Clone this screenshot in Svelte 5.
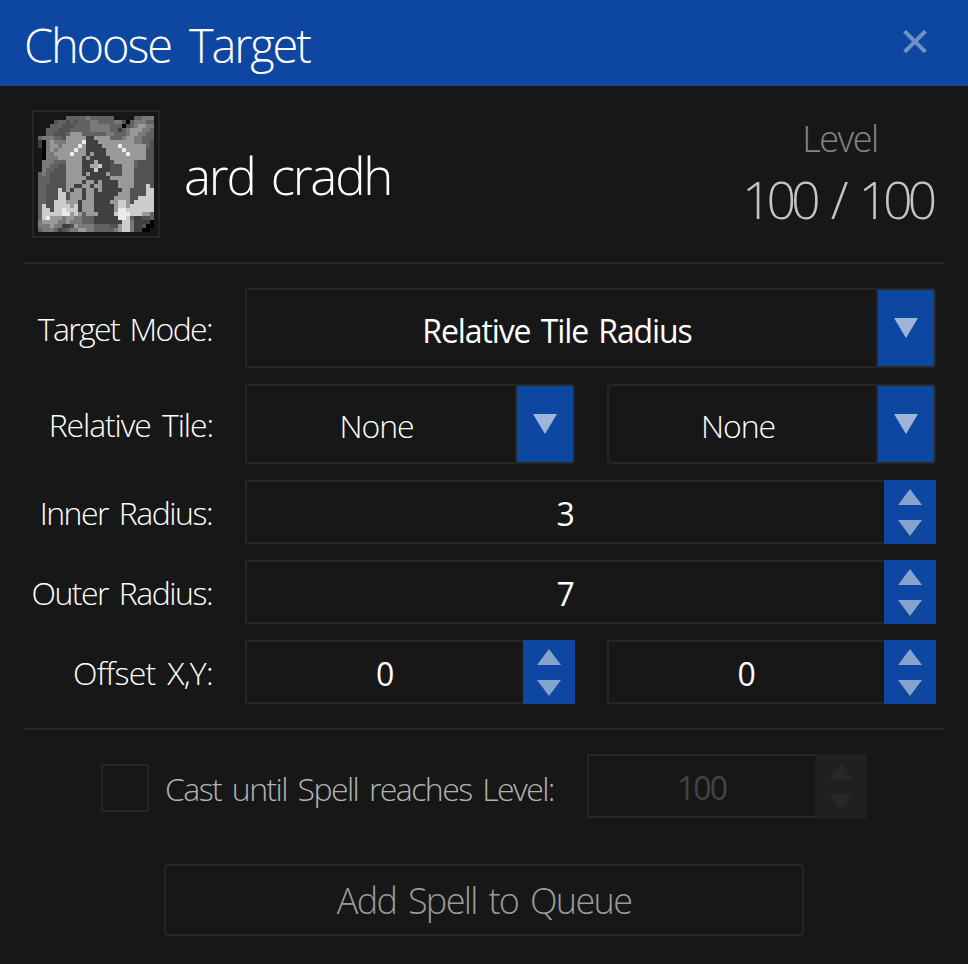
<script>
  // Spell icon, one character per pixel: '.' is empty, 0-9 runs from black to near white.
  const shades = ['#000000', '#262626', '#404040', '#525252', '#626262', '#7a7a7a', '#999999', '#a8a8a8', '#cccccc', '#eaeaea'];
  const sprite = [
    '.......444445444444.....44555',
    '....3443434445544445530455544',
    '...44433344445555544403456655',
    '..444333444445555544245666554',
    '..443334666444444554445665544',
    '45554436666622666644456655444',
    '20565556666922266666666655443',
    '20566566669622226666966666643',
    '.0565666696622222666696666633',
    '.0556666966626222666669666633',
    '.0555666666262222266666666633',
    '.5554446666222722236666643333',
    '.5544336666227782233366643333',
    '.5443336666222822233366633333',
    '45433336666262222633366633333',
    '44433336666622222266666633333',
    '44433336666266262222666633333',
    '44333336622662662222666633383',
    '44333836266266262222266333388',
    '44333883666266222222666333388',
    '44333883666266222226666338888',
    '44338886662666222266886388888',
    '48338888682666222226886888888',
    '48838898882666222226998888888',
    '48888899686466622228999888664',
    '48966656655444222222998422334',
    '56666556555444222222288522220',
    '55565522365555444433688522300',
    '4555423455665544444568852200.'
  ];
  const pixels = sprite.flatMap((row, y) =>
    [...row].map((c, x) => ({ c, x, y })).filter((p) => p.c !== '.')
  );
</script>

{#snippet combo(value, strong)}
  <div class="combo">
    <span class="value" class:strong>{value}</span>
    <button class="drop" aria-label="Open list">
      <svg width="24" height="20"><path d="M0 0H24L12 20Z" /></svg>
    </button>
  </div>
{/snippet}

{#snippet spinner(value, disabled)}
  <div class="spinner" class:disabled>
    <span class="value strong">{value}</span>
    <div class="steps">
      <svg width="24" height="16"><path d="M0 16H24L12 0Z" /></svg>
      <svg width="24" height="16"><path d="M0 0H24L12 16Z" /></svg>
    </div>
  </div>
{/snippet}

<div class="window">
  <header>
    <h1>Choose Target</h1>
    <svg class="close" width="24" height="24" viewBox="0 0 24 24"><path d="M1.6 1.3L22.4 21.9M22.4 1.3L1.6 21.9" /></svg>
  </header>

  <section class="spell">
    <div class="icon">
      <svg width="116" height="116" viewBox="0 0 29 29" shape-rendering="crispEdges">
        {#each pixels as p}
          <rect x={p.x} y={p.y} width="1" height="1" fill={shades[+p.c]} />
        {/each}
      </svg>
    </div>
    <div class="name">ard cradh</div>
    <div class="level">
      <span class="caption">Level</span>
      <span class="amount">100 / 100</span>
    </div>
  </section>

  <section class="form">
    <div class="row tall">
      <span class="label mode">Target Mode:</span>
      {@render combo('Relative Tile Radius', true)}
    </div>
    <div class="row tall">
      <span class="label tile">Relative Tile:</span>
      <div class="pair">{@render combo('None', false)}{@render combo('None', false)}</div>
    </div>
    <div class="row">
      <span class="label">Inner Radius:</span>
      {@render spinner('3', false)}
    </div>
    <div class="row">
      <span class="label">Outer Radius:</span>
      {@render spinner('7', false)}
    </div>
    <div class="row">
      <span class="label offset">Offset X,Y:</span>
      <div class="pair">{@render spinner('0', false)}{@render spinner('0', false)}</div>
    </div>
  </section>

  <section class="until">
    <span class="check"></span>
    <span class="text">Cast until Spell reaches Level:</span>
    {@render spinner('100', true)}
  </section>

  <button class="submit">Add Spell to Queue</button>
</div>

<style>
  :global(body) {
    margin: 0;
    background: #171717;
  }
  .window {
    width: 968px;
    height: 964px;
    box-sizing: border-box;
    overflow: hidden;
    background: #171717;
    color: #fff;
    font: 300 32px/40px 'Open Sans', 'Noto Sans', sans-serif;
    white-space: nowrap;
  }
  .window * {
    box-sizing: border-box;
  }
  svg {
    display: block;
  }
  button {
    margin: 0;
    padding: 0;
    font: inherit;
  }
  header {
    display: flex;
    justify-content: space-between;
    height: 86px;
    padding: 0 41px 0 24px;
    background: #0d47a1;
  }
  h1 {
    margin: 0;
    padding-top: 15px;
    font-size: 47px;
    font-weight: 300;
    line-height: 60px;
    letter-spacing: -2.15px;
    word-spacing: 8px;
  }
  .close {
    margin-top: 30px;
  }
  .close path {
    stroke: #6e91c7;
    stroke-width: 4;
    fill: none;
  }
  .spell {
    display: flex;
    height: 178px;
    margin: 0 24px;
    padding: 24px 8px 0;
    border-bottom: 2px solid #262626;
  }
  .icon {
    width: 128px;
    height: 128px;
    padding: 4px;
    border: 2px solid #262626;
  }
  .name {
    flex: 1;
    padding: 30px 0 0 24px;
    font-size: 51px;
    line-height: 70px;
    letter-spacing: -2.2px;
    word-spacing: 5px;
  }
  .level {
    display: flex;
    flex-direction: column;
    align-items: center;
    width: 192px;
  }
  .caption {
    margin-top: 8px;
    color: #858585;
    font-size: 36px;
    line-height: 42px;
    letter-spacing: -1.4px;
  }
  .amount {
    margin: 7px 6px 0 0;
    color: #c5c5c5;
    font-size: 52px;
    line-height: 64px;
    letter-spacing: -5.2px;
    word-spacing: 7px;
  }
  .form {
    display: flex;
    flex-direction: column;
    gap: 16px;
    height: 466px;
    margin: 0 24px;
    padding: 24px 8px 0;
    border-bottom: 2px solid #262626;
  }
  .row {
    display: flex;
    align-items: center;
    height: 64px;
  }
  .tall {
    height: 80px;
  }
  .label {
    display: flex;
    justify-content: flex-end;
    flex: none;
    width: 181px;
    margin-right: 32px;
    padding: 2px 1px 0 0;
    letter-spacing: -1.5px;
    word-spacing: 4px;
  }
  .mode {
    letter-spacing: -1.65px;
  }
  .tile {
    padding-right: 0;
    letter-spacing: -1.1px;
  }
  .offset {
    padding-right: 0;
    letter-spacing: -0.7px;
  }
  .pair {
    display: grid;
    grid-template-columns: 330px 329px;
    gap: 32px;
    width: 691px;
    height: 100%;
  }
  .combo,
  .spinner {
    display: flex;
    flex: 1;
    height: 100%;
  }
  .value {
    flex: 1;
    align-self: center;
    padding: 3px 1px 0 0;
    text-align: center;
    letter-spacing: -1.1px;
    word-spacing: 3px;
  }
  .strong {
    font-weight: 400;
  }
  .combo {
    border: 2px solid #262626;
    border-radius: 4px;
  }
  .combo .value {
    padding: 4px 9px 0 0;
  }
  .combo .strong {
    padding-top: 5px;
  }
  .drop {
    display: flex;
    justify-content: center;
    width: 58px;
    padding-top: 28px;
    border: 0;
    border-left: 2px solid #262626;
    background: #0d47a1;
  }
  .drop svg {
    fill: #9eb5d9;
  }
  .spinner {
    border: 2px solid #262626;
  }
  .steps {
    display: flex;
    flex-direction: column;
    align-items: center;
    gap: 15px;
    width: 52px;
    height: 64px;
    margin: -2px -2px -2px 0;
    padding-top: 9px;
    background: #0d47a1;
  }
  .steps svg {
    fill: #86a3d0;
  }
  .until {
    display: flex;
    align-items: center;
    height: 64px;
    margin: 24px 101px 0;
  }
  .check {
    width: 48px;
    height: 48px;
    margin-top: 4px;
    border: 2px solid #262626;
  }
  .text {
    width: 438px;
    padding: 5px 0 0 16px;
    color: #b3b3b3;
    letter-spacing: -1.58px;
    word-spacing: 4px;
  }
  .disabled {
    color: #444;
  }
  .disabled .value {
    letter-spacing: -2px;
  }
  .disabled .steps {
    background: #202020;
  }
  .disabled .steps svg {
    fill: #272727;
  }
  .submit {
    display: block;
    width: 640px;
    height: 72px;
    margin: 46px auto 0;
    padding-top: 2px;
    border: 2px solid #262626;
    border-radius: 3px;
    background: none;
    color: #9b9b9b;
    font-size: 36px;
    letter-spacing: -1.65px;
    word-spacing: 4px;
  }
</style>
